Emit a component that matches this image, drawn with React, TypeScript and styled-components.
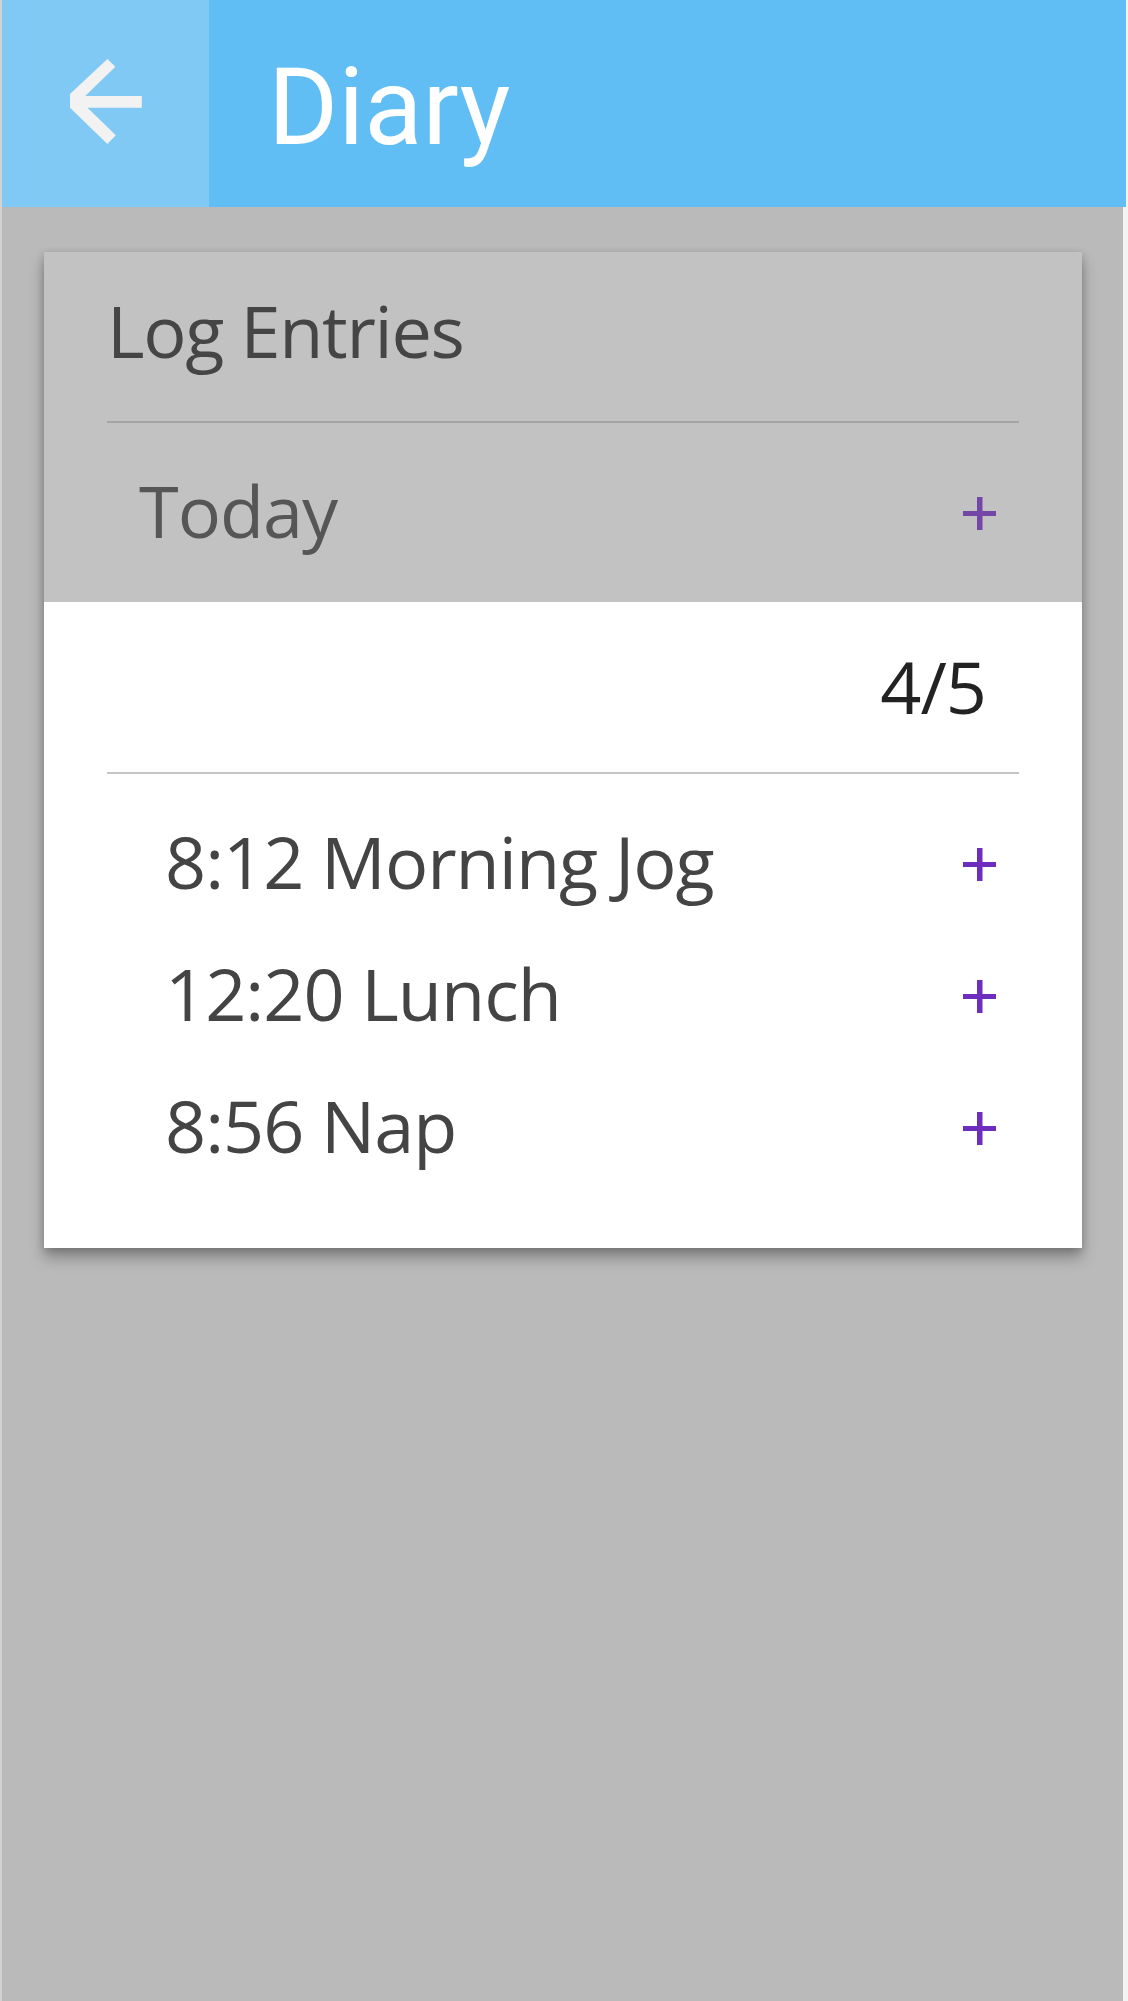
import React from "react";
import styled, { createGlobalStyle } from "styled-components";

const GlobalStyle = createGlobalStyle`
  html, body {
    margin: 0;
    padding: 0;
    background: #f3f3f3;
  }
  body {
    font-family: "Open Sans", "DejaVu Sans", sans-serif;
  }
`;

const Page = styled.div`
  width: 1124px;
  min-height: 2001px;
  border-left: 2px solid #d2d2d2;
  display: flex;
  flex-direction: column;
`;

const AppBar = styled.header`
  height: 207px;
  display: flex;
  background: #61bef4;
`;

const BackButton = styled.button`
  width: 207px;
  height: 100%;
  border: none;
  padding: 0 0 4px;
  background: #80c9f4;
  display: flex;
  align-items: center;
  justify-content: center;
  cursor: pointer;
`;

const Title = styled.h1`
  margin: 0;
  padding: 8px 0 0 59px;
  font-family: Roboto, "Liberation Sans", sans-serif;
  font-weight: 400;
  font-size: 107px;
  line-height: 199px;
  color: #ffffff;
`;

const Main = styled.main`
  flex: 1;
  width: 1121px;
  background: #bababa;
  padding: 45px 0 0 42px;
  box-sizing: border-box;
`;

const Card = styled.section`
  width: 1038px;
  background: #ffffff;
  box-shadow: 0 10px 14px rgba(0, 0, 0, 0.28), 0 2px 8px rgba(0, 0, 0, 0.18);
`;

const CardHead = styled.div`
  background: #c2c2c2;
  padding: 28px 0 42px;
`;

const CardBody = styled.div`
  padding: 34px 0 57px;
`;

const Heading = styled.h2`
  margin: 0 63px;
  font-weight: 400;
  font-size: 72px;
  letter-spacing: -1.3px;
  line-height: 100px;
  color: #454545;
`;

const Divider = styled.hr<{ $tone: string; $gap: string }>`
  margin: ${(p) => p.$gap} 63px 0;
  height: 2px;
  border: none;
  background: ${(p) => p.$tone};
`;

const Row = styled.div<{ $indent: number; $height: number }>`
  display: flex;
  align-items: center;
  justify-content: space-between;
  padding: 0 86px 0 ${(p) => p.$indent}px;
  height: ${(p) => p.$height}px;
`;

const RowText = styled.span<{ $color: string }>`
  font-size: 72px;
  letter-spacing: -1px;
  line-height: 100px;
  color: ${(p) => p.$color};
  white-space: nowrap;
`;

const Count = styled.div`
  padding-right: 96px;
  text-align: right;
  font-size: 72px;
  letter-spacing: -1px;
  line-height: 100px;
  color: #222222;
`;

const List = styled.div`
  margin-top: 21px;
`;

const AddButton = styled.button`
  border: none;
  background: transparent;
  padding: 0;
  margin-top: 6px;
  width: 33px;
  height: 33px;
  display: flex;
  cursor: pointer;
`;

const BackArrow = () => (
  <svg width="72" height="85" viewBox="0 0 72 85">
    <polygon
      fill="#f2f2f2"
      points="0,35 37.4,0 45.4,7.7 15.2,37 71.8,37 71.8,48.7 17.5,48.7 45.8,76.3 37.4,85 0,48.7"
    />
  </svg>
);

const Plus = ({ color }: { color: string }) => (
  <svg width="33" height="33" viewBox="0 0 33 33">
    <rect x="0" y="14" width="33" height="5" fill={color} />
    <rect x="14" y="0" width="5.5" height="33" fill={color} />
  </svg>
);

const entries = ["8:12 Morning Jog", "12:20 Lunch", "8:56 Nap"];

export default function App() {
  return (
    <>
      <GlobalStyle />
      <Page>
        <AppBar>
          <BackButton aria-label="Back">
            <BackArrow />
          </BackButton>
          <Title>Diary</Title>
        </AppBar>
        <Main>
          <Card>
            <CardHead>
              <Heading>Log Entries</Heading>
              <Divider $tone="#a4a4a4" $gap="41px" />
              <Row $indent={95} $height={100} style={{ marginTop: 37 }}>
                <RowText $color="#565656">Today</RowText>
                <AddButton aria-label="Add">
                  <Plus color="#7447a7" />
                </AddButton>
              </Row>
            </CardHead>
            <CardBody>
              <Count>4/5</Count>
              <Divider $tone="#c4c4c4" $gap="36px" />
              <List>
                {entries.map((e) => (
                  <Row key={e} $indent={121} $height={132}>
                    <RowText $color="#444444">{e}</RowText>
                    <AddButton aria-label="Add">
                      <Plus color="#6e2dbf" />
                    </AddButton>
                  </Row>
                ))}
              </List>
            </CardBody>
          </Card>
        </Main>
      </Page>
    </>
  );
}
